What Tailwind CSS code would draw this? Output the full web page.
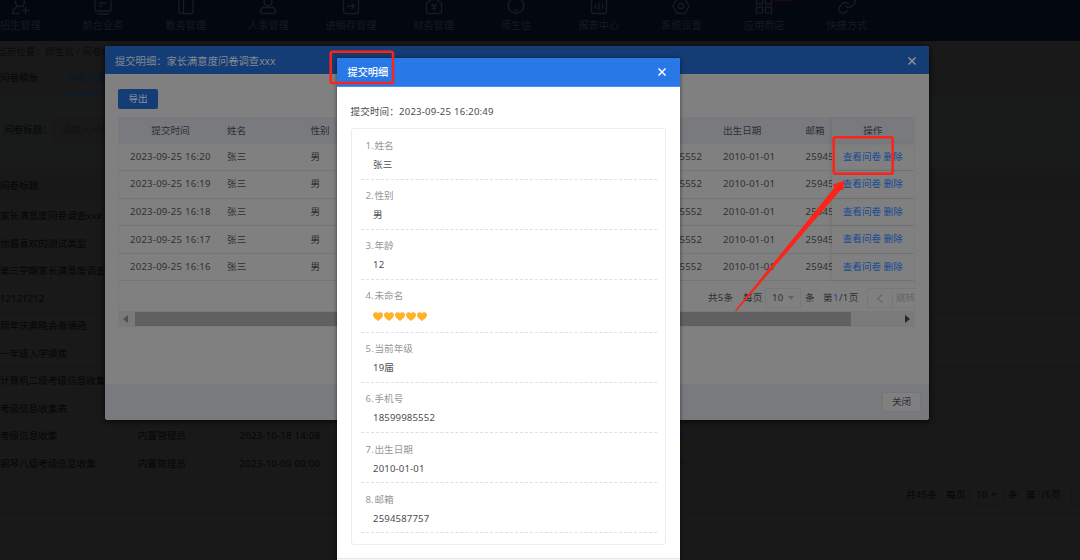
<!DOCTYPE html>
<html lang="zh-CN">
<head>
    <meta charset="UTF-8">
    <meta name="viewport" content="width=device-width, initial-scale=1.0">
    <title>提交明细</title>
    <script src="https://cdn.jsdelivr.net/npm/@tailwindcss/browser@4"></script>
</head>
<body class="relative h-[560px] w-[1080px] overflow-hidden bg-[#191919] font-['Noto_Sans','Noto_Sans_CJK_SC',sans-serif] text-[9.6px] leading-[14px] text-[#060606]">

    <!-- Top navigation -->
    <nav class="flex h-[41px] bg-[#03070f] pl-[62px] text-[10.2px] text-[#181b20]">
        <div class="-ml-[83px] flex w-[82.65px] shrink-0 flex-col items-center">
            <svg class="-mt-[5px] h-5 w-5" viewBox="0 0 20 20" fill="none" stroke="currentColor" stroke-width="1.4"><circle cx="10" cy="7" r="4.5"/><path d="M7.500 11.500c-3 1.500-4.500 3.500-5 7h7M12.500 11l1.500 1M15.500 12v7M12 15.500h7"/></svg>
            <span class="mt-[3px]">招生管理</span>
        </div>
        <div class="flex w-[82.65px] shrink-0 flex-col items-center">
            <svg class="-mt-[5px] h-5 w-5" viewBox="0 0 20 20" fill="none" stroke="currentColor" stroke-width="1.4"><rect x="2" y="2" width="16" height="14" rx="2"/><path d="M6 8h7M6 11h3M4 19h12"/></svg>
            <span class="mt-[3px]">前台业务</span>
        </div>
        <div class="flex w-[82.65px] shrink-0 flex-col items-center">
            <svg class="-mt-[5px] h-5 w-5" viewBox="0 0 20 20" fill="none" stroke="currentColor" stroke-width="1.4"><rect x="3" y="2" width="14" height="16.500" rx="2"/><path d="M7.500 2v16.500"/></svg>
            <span class="mt-[3px]">教务管理</span>
        </div>
        <div class="flex w-[82.65px] shrink-0 flex-col items-center">
            <svg class="-mt-[5px] h-5 w-5" viewBox="0 0 20 20" fill="none" stroke="currentColor" stroke-width="1.4"><circle cx="10" cy="7" r="4"/><path d="M5 12.500h10q2.500 1 2.500 4.500q0 1.500-1.500 1.500H4q-1.500 0-1.500-1.500q0-3.500 2.500-4.500z"/></svg>
            <span class="mt-[3px]">人事管理</span>
        </div>
        <div class="flex w-[82.65px] shrink-0 flex-col items-center">
            <svg class="-mt-[5px] h-5 w-5" viewBox="0 0 20 20" fill="none" stroke="currentColor" stroke-width="1.4"><rect x="2.500" y="3" width="15" height="15.500" rx="2.500"/><path d="M6 11h7M10.500 8l3 3-3 3"/></svg>
            <span class="mt-[3px]">进销存管理</span>
        </div>
        <div class="flex w-[82.65px] shrink-0 flex-col items-center">
            <svg class="-mt-[5px] h-5 w-5" viewBox="0 0 20 20" fill="none" stroke="currentColor" stroke-width="1.4"><path d="M2.500 8L10 3l7.500 5v8.500q0 2-2 2h-11q-2 0-2-2z"/><path stroke-width="1.200" d="M7.500 8.500l2.500 2.500 2.500-2.500M10 11v4.500M7.500 11.200h5M7.500 13.400h5"/></svg>
            <span class="mt-[3px]">财务管理</span>
        </div>
        <div class="flex w-[82.65px] shrink-0 flex-col items-center">
            <svg class="-mt-[5px] h-5 w-5" viewBox="0 0 20 20" fill="none" stroke="currentColor" stroke-width="1.4"><circle cx="10" cy="10.500" r="7.800"/><path d="M8 15.500h4"/></svg>
            <span class="mt-[3px]">师生信</span>
        </div>
        <div class="flex w-[82.65px] shrink-0 flex-col items-center">
            <svg class="-mt-[5px] h-5 w-5" viewBox="0 0 20 20" fill="none" stroke="currentColor" stroke-width="1.4"><rect x="2.500" y="3" width="15" height="15.500" rx="2"/><path d="M6.500 9v5M10 7.500v7.500M13.500 8.500v5"/></svg>
            <span class="mt-[3px]">报表中心</span>
        </div>
        <div class="flex w-[82.65px] shrink-0 flex-col items-center">
            <svg class="-mt-[5px] h-5 w-5" viewBox="0 0 20 20" fill="none" stroke="currentColor" stroke-width="1.4"><path d="M6 3.500h8l4 7.500-4 7.500H6L2 11z"/><circle cx="10" cy="11" r="2.800"/></svg>
            <span class="mt-[3px]">系统设置</span>
        </div>
        <div class="relative flex w-[82.65px] shrink-0 flex-col items-center">
            <svg class="-mt-[5px] h-5 w-5" viewBox="0 0 20 20" fill="none" stroke="currentColor" stroke-width="1.4"><rect x="2.500" y="3" width="6" height="6"/><rect x="11.500" y="3" width="6" height="6"/><rect x="2.500" y="12" width="6" height="6"/><rect x="11.500" y="12" width="6" height="6"/></svg>
            <span class="absolute top-0 left-[52px] h-[1px] w-[18px] bg-[#2a0606]"></span>
            <span class="mt-[3px]">应用商店</span>
        </div>
        <div class="flex w-[82.65px] shrink-0 flex-col items-center">
            <svg class="-mt-[5px] h-5 w-5" viewBox="0 0 24 24" fill="none" stroke="currentColor" stroke-width="1.800" stroke-linecap="round"><path d="M10 13a5 5 0 0 0 7.540.540l3-3a5 5 0 0 0-7.070-7.070l-1.720 1.710M14 11a5 5 0 0 0-7.540-.540l-3 3a5 5 0 0 0 7.070 7.070l1.710-1.710"/></svg>
            <span class="mt-[3px]">快捷方式</span>
        </div>
    </nav>

    <!-- Page behind the dialogs -->
    <div class="flex h-[20px] items-center pt-[2px] text-[#0b0b0b]"><span class="-ml-[3px]">当前位置：师生信 / 问卷收集</span></div>
    <div class="flex h-[33px] bg-[#191919]">
        <span class="w-[61px] pt-[10px]">问卷模板</span>
        <span class="h-[33px] w-[50px] border-b-2 border-[#0a1a33] pt-[10px] pl-[6px] whitespace-nowrap text-[#07172e]">问卷列表</span>
    </div>
    <div class="flex h-[75px] items-start bg-[#191b1a] pt-[25px] pl-[4px]">
        <span class="w-[49px] pt-[4px] whitespace-nowrap">问卷标题：</span>
        <span class="h-[22px] w-[120px] rounded-sm border border-[#161717] bg-[#191919] pt-[3px] pl-[8px] text-[#121212]">请输入问卷标题</span>
    </div>
    <div class="flex h-[34px] items-center bg-[#181818]">问卷标题<span class="ml-[3px] text-[6px] text-[#111]">◇</span></div>
    <div id="surveyRows"></div>
    <div class="flex h-[35px] items-center border-b border-[#161616] pl-[906px] tracking-[0.2px] whitespace-nowrap">
        <span class="w-[40px] shrink-0">共45条</span>
        <span class="w-[23px] shrink-0">每页</span>
        <span class="flex h-[20px] w-[35px] shrink-0 items-center justify-between border border-[#161616] px-[6px]">10<svg class="h-[4px] w-[6px] fill-[#0f0f0f]" viewBox="0 0 6 4"><path d="M0 0h6L3 4z"/></svg></span>
        <span class="ml-[4px] w-[18px] shrink-0">条</span>
        <span class="w-[45px] shrink-0">第<span class="text-[#07172e]">1</span>/5页</span>
        <span class="h-[20px] w-[20px] shrink-0 border border-[#161616]"></span>
    </div>

    <!-- Submission list dialog -->
    <section class="absolute top-[46px] left-[105px] flex h-[373.500px] w-[823.500px] flex-col overflow-hidden rounded-[3px] bg-[#808080] text-[#2f3032] shadow-[0_1px_6px_#000c]">
        <header class="flex h-[28px] shrink-0 items-center justify-between bg-[#143d76] pt-px pr-[13px] pl-[10px] text-[10.300px] text-[#85898f]">
            <span>提交明细：家长满意度问卷调查xxx</span>
            <svg class="h-[8px] w-[8px]" viewBox="0 0 8 8" stroke="#8c9299" stroke-width="1.500"><path d="M.5.5l7 7M7.500.5l-7 7"/></svg>
        </header>
        <div class="flex-1 pt-[15px] pl-[13px]">
            <button class="block h-[20px] w-[40px] rounded-[2px] bg-[#143d76] text-[#8d9299]">导出</button>
            <div class="mt-[8px] h-[195px] w-[797px] overflow-hidden border-x border-[#7a7b7d]">
                <div class="flex h-[26.500px] items-center bg-[#787a7e] pt-px">
                    <span class="w-[97px] shrink-0 pl-[6px] text-center">提交时间</span>
                    <span class="w-[82.500px] shrink-0 pl-[11px]">姓名</span>
                    <span class="w-[412.500px] shrink-0 pl-[12px]">性别</span>
                    <span class="w-[82.500px] shrink-0 pl-[12px]">出生日期</span>
                    <span class="w-[38px] shrink-0 pl-[12px] whitespace-nowrap">邮箱</span>
                    <span class="flex-1 self-stretch pt-[6px] text-center shadow-[-2px_0_4px_#0001]">操作</span>
                </div>
                <div id="submitRows"></div>
                <div class="flex h-[30px] items-center pt-[4px] pl-[589px] tracking-[0.2px] whitespace-nowrap">
                    <span class="w-[35px] shrink-0">共5条</span>
                    <span class="w-[22px] shrink-0">每页</span>
                    <span class="flex h-[20px] w-[36px] shrink-0 items-center justify-between rounded-[2px] border border-[#77787a] px-[6px]">10<svg class="h-[4px] w-[6px] fill-[#606164]" viewBox="0 0 6 4"><path d="M0 0h6L3 4z"/></svg></span>
                    <span class="ml-[4px] w-[18px] shrink-0">条</span>
                    <span class="w-[44px] shrink-0 tracking-[0.4px]">第<span class="text-[#174b94]">1</span>/1页</span>
                    <span class="flex h-[20px] w-[26px] shrink-0 items-center justify-center rounded-l-[2px] border border-[#77787a]"><svg class="h-[9px] w-[6px]" viewBox="0 0 6 9" fill="none" stroke="#58595b"><path d="M5.500.5l-5 4 5 4"/></svg></span>
                    <span class="h-[20px] shrink-0 border-y border-[#77787a] pt-[2px] pl-[3px] tracking-normal text-[#656668]">跳转</span>
                </div>
            </div>
            <!-- Horizontal scrollbar -->
            <div class="-mt-[1px] flex h-[16px] w-[797px] items-center bg-[#7a7a7a]">
                <svg class="mr-[7px] ml-[5px] h-[8px] w-[5px] fill-[#505050]" viewBox="0 0 5 8"><path d="M5 0v8L0 4z"/></svg>
                <span class="mb-px h-[14px] w-[716px] bg-[#606060]"></span>
                <svg class="mr-[5px] ml-auto h-[8px] w-[5px] fill-[#282828]" viewBox="0 0 5 8"><path d="M0 0v8l5-4z"/></svg>
            </div>
        </div>
        <footer class="flex h-[35.500px] shrink-0 items-center justify-end bg-[#787a7d] pr-[7.500px]">
            <button class="h-[20px] w-[39px] rounded-[2px] border border-[#747679] bg-[#808080] pt-px">关闭</button>
        </footer>
    </section>

    <!-- Submission detail dialog -->
    <section class="absolute top-[58px] left-[337px] h-[502px] w-[342.500px] overflow-hidden rounded-t-[3px] bg-white text-[#4c4d50] shadow-[0_0_4px_#0008]">
        <header class="flex h-[28.500px] items-center justify-between border-b border-[#4b8eec] bg-[#2878e8] pr-[13.500px] pl-[10.500px] text-[10.200px] font-medium text-white">
            <span>提交明细</span>
            <svg class="h-[8px] w-[8px]" viewBox="0 0 8 8" stroke="#fff" stroke-width="1.500"><path d="M.5.5l7 7M7.500.5l-7 7"/></svg>
        </header>
        <p class="mt-[18px] ml-[13.500px] h-[23.500px] tracking-[0.1px]">提交时间：<span class="tracking-[0.220px]">2023-09-25 16:20:49</span></p>
        <div id="answers" class="ml-[14px] h-[417px] w-[315px] rounded-[3px] border border-[#eaebf3] px-[8.500px] pt-[0.500px]"></div>
        <div class="mt-[13px] h-[3px] border-t border-[#e8e9f0] bg-[#f5f6fa]"></div>
    </section>

    <!-- Highlight boxes and arrow -->
    <svg class="absolute inset-0 h-[560px] w-[1080px]" viewBox="0 0 1080 560" fill="none">
        <rect x="330.700" y="51.700" width="62.300" height="31.300" rx="1.800" stroke="#fb2419" stroke-width="2.500"/>
        <rect x="833.700" y="137.200" width="59" height="36.600" rx="1.800" stroke="#fb2419" stroke-width="2.500"/>
        <path d="M735 310.500L834.500 187.500l-1.500-3 11.500-4-1.500 10-2.500-.5L736 311.500z" fill="#fb2419"/>
    </svg>

    <script>
        const surveys = [
            ["家长满意度问卷调查xxx"], ["你最喜欢的测试类型"], ["第三学期家长满意度调查"], ["12121212"], ["周年庆典晚会邀请函"],
            ["一年级入学摸底"], ["计算机二级考级信息收集"], ["考级信息收集表"],
            ["考级信息收集", "内置管理员", "2023-10-18 14:08"],
            ["钢琴八级考级信息收集", "内置管理员", "2023-10-09 09:00"]
        ];
        document.getElementById("surveyRows").innerHTML = surveys.map(([title, user = "", time = ""]) => `
            <div class="flex h-[27.500px] items-center border-b border-[#161616] whitespace-nowrap">
                <span class="w-[138px]">${title}</span>
                <span class="w-[101.500px]">${user}</span>
                <span class="w-[436px] tracking-[0.220px]">${time}</span>
                <span class="text-[#07172e]">${user ? "作" : ""}</span>
            </div>`).join("");

        document.getElementById("submitRows").innerHTML = [20, 19, 18, 17, 16].map(minute => `
            <div class="flex h-[27.600px] items-center border-b border-[#747577] tracking-[0.220px] whitespace-nowrap">
                <span class="w-[97px] shrink-0 pl-[11px]">2023-09-25 16:${minute}</span>
                <span class="w-[82.500px] shrink-0 pl-[11px]">张三</span>
                <span class="w-[330px] shrink-0 pl-[12px]">男</span>
                <span class="w-[82.500px] shrink-0 pl-[12px] tracking-[0.1px]">18599985552</span>
                <span class="w-[82.500px] shrink-0 pl-[12px]">2010-01-01</span>
                <span class="w-[38px] shrink-0 overflow-hidden pl-[12px]">2594587757</span>
                <span class="flex-1 self-stretch pt-[6px] text-center tracking-normal text-[#174b94] shadow-[-2px_0_4px_#0001]">查看问卷 删除</span>
            </div>`).join("");

        const heart = `<svg class="h-[9px] w-[10px] fill-[#ffb226]" viewBox="0 0 10 9"><path d="M5 9C2.500 7.300 0 5.500 0 3.100 0 1.300 1.200.3 2.600.3 3.700.3 4.500.8 5 1.600 5.500.8 6.300.3 7.400.3 8.800.3 10 1.300 10 3.100 10 5.500 7.500 7.300 5 9z"/></svg>`;
        const answers = [
            ["1", "姓名", "张三"], ["2", "性别", "男"], ["3", "年龄", "12"],
            ["4", "未命名", `<span class="flex h-[17px] items-center gap-px">${heart.repeat(5)}</span>`],
            ["5", "当前年级", "19届"], ["6", "手机号", "18599985552"], ["7", "出生日期", "2010-01-01"], ["8", "邮箱", "2594587757"]
        ];
        document.getElementById("answers").innerHTML = answers.map(([no, label, value]) => `
            <div class="border-b border-dashed border-[#dfe0e4] pt-[9.500px] pb-[6.600px] pl-[5px]">
                <div class="text-[#96989d]"><span class="inline-block w-[9px] tracking-[0.3px]">${no}.</span>${label}</div>
                <div class="mt-[5px] pl-[7.500px] tracking-[0.150px]">${value}</div>
            </div>`).join("");
    </script>
</body>
</html>
